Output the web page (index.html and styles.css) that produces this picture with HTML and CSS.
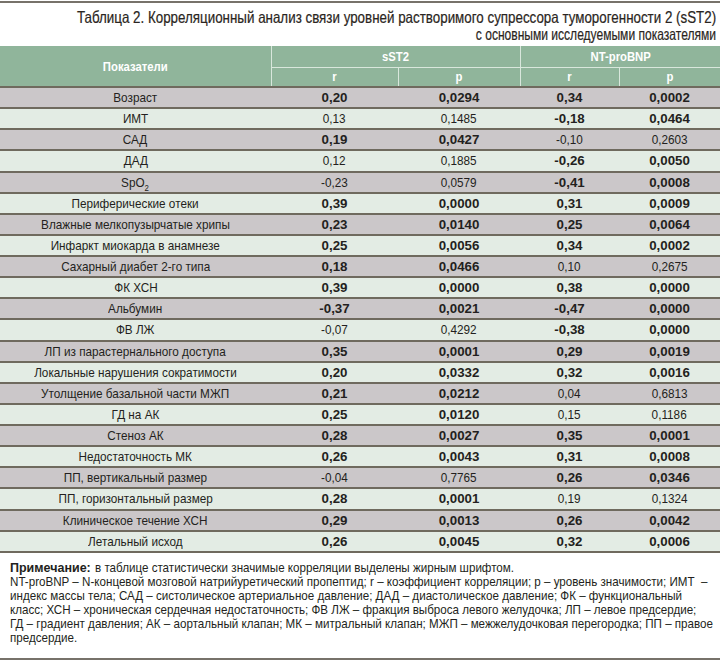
FILE: index.html
```html
<!DOCTYPE html>
<html lang="ru">
<head>
<meta charset="utf-8">
<link rel="stylesheet" href="styles.css">
</head>
<body>
<div class="page">
  <div class="rule"></div>
  <h1 class="title">
    <span class="tl tl1">Таблица 2. Корреляционный анализ связи уровней растворимого супрессора туморогенности 2 (sST2)</span>
    <span class="tl tl2">с основными исследуемыми показателями</span>
  </h1>
  <table class="tbl">
    <colgroup>
      <col class="c0"><col class="c1"><col class="c2"><col class="c3"><col class="c4">
    </colgroup>
    <thead>
      <tr class="h1">
        <th rowspan="2"><span>Показатели</span></th>
        <th colspan="2"><span>sST2</span></th>
        <th colspan="2"><span>NT-proBNP</span></th>
      </tr>
      <tr class="h2">
        <th><span>r</span></th><th><span>p</span></th><th><span>r</span></th><th><span>p</span></th>
      </tr>
    </thead>
    <tbody>
      <tr><td><span>Возраст</span></td><td class="b">0,20</td><td class="b">0,0294</td><td class="b">0,34</td><td class="b">0,0002</td></tr>
      <tr><td><span>ИМТ</span></td><td><span>0,13</span></td><td><span>0,1485</span></td><td class="b">-0,18</td><td class="b">0,0464</td></tr>
      <tr><td><span>САД</span></td><td class="b">0,19</td><td class="b">0,0427</td><td><span>-0,10</span></td><td><span>0,2603</span></td></tr>
      <tr><td><span>ДАД</span></td><td><span>0,12</span></td><td><span>0,1885</span></td><td class="b">-0,26</td><td class="b">0,0050</td></tr>
      <tr><td><span>SpO<sub>2</sub></span></td><td><span>-0,23</span></td><td><span>0,0579</span></td><td class="b">-0,41</td><td class="b">0,0008</td></tr>
      <tr><td><span>Периферические отеки</span></td><td class="b">0,39</td><td class="b">0,0000</td><td class="b">0,31</td><td class="b">0,0009</td></tr>
      <tr><td><span>Влажные мелкопузырчатые хрипы</span></td><td class="b">0,23</td><td class="b">0,0140</td><td class="b">0,25</td><td class="b">0,0064</td></tr>
      <tr><td><span>Инфаркт миокарда в анамнезе</span></td><td class="b">0,25</td><td class="b">0,0056</td><td class="b">0,34</td><td class="b">0,0002</td></tr>
      <tr><td><span>Сахарный диабет 2-го типа</span></td><td class="b">0,18</td><td class="b">0,0466</td><td><span>0,10</span></td><td><span>0,2675</span></td></tr>
      <tr><td><span>ФК ХСН</span></td><td class="b">0,39</td><td class="b">0,0000</td><td class="b">0,38</td><td class="b">0,0000</td></tr>
      <tr><td><span>Альбумин</span></td><td class="b">-0,37</td><td class="b">0,0021</td><td class="b">-0,47</td><td class="b">0,0000</td></tr>
      <tr><td><span>ФВ ЛЖ</span></td><td><span>-0,07</span></td><td><span>0,4292</span></td><td class="b">-0,38</td><td class="b">0,0000</td></tr>
      <tr><td><span>ЛП из парастернального доступа</span></td><td class="b">0,35</td><td class="b">0,0001</td><td class="b">0,29</td><td class="b">0,0019</td></tr>
      <tr><td><span>Локальные нарушения сократимости</span></td><td class="b">0,20</td><td class="b">0,0332</td><td class="b">0,32</td><td class="b">0,0016</td></tr>
      <tr><td><span>Утолщение базальной части МЖП</span></td><td class="b">0,21</td><td class="b">0,0212</td><td><span>0,04</span></td><td><span>0,6813</span></td></tr>
      <tr><td><span>ГД на АК</span></td><td class="b">0,25</td><td class="b">0,0120</td><td><span>0,15</span></td><td><span>0,1186</span></td></tr>
      <tr><td><span>Стеноз АК</span></td><td class="b">0,28</td><td class="b">0,0027</td><td class="b">0,35</td><td class="b">0,0001</td></tr>
      <tr><td><span>Недостаточность МК</span></td><td class="b">0,26</td><td class="b">0,0043</td><td class="b">0,31</td><td class="b">0,0008</td></tr>
      <tr><td><span>ПП, вертикальный размер</span></td><td><span>-0,04</span></td><td><span>0,7765</span></td><td class="b">0,26</td><td class="b">0,0346</td></tr>
      <tr><td><span>ПП, горизонтальный размер</span></td><td class="b">0,28</td><td class="b">0,0001</td><td><span>0,19</span></td><td><span>0,1324</span></td></tr>
      <tr><td><span>Клиническое течение ХСН</span></td><td class="b">0,29</td><td class="b">0,0013</td><td class="b">0,26</td><td class="b">0,0042</td></tr>
      <tr><td><span>Летальный исход</span></td><td class="b">0,26</td><td class="b">0,0045</td><td class="b">0,32</td><td class="b">0,0006</td></tr>
    </tbody>
  </table>
  <div class="note">
    <div class="ln"><strong>Примечание:</strong> <span>в таблице статистически значимые корреляции выделены жирным шрифтом.</span></div>
    <div class="ln"><span>NT-proBNP – N-концевой мозговой натрийуретический пропептид; r – коэффициент корреляции; p – уровень значимости; ИМТ &nbsp;–</span></div>
    <div class="ln"><span>индекс массы тела; САД – систолическое артериальное давление; ДАД – диастолическое давление; ФК – функциональный</span></div>
    <div class="ln"><span>класс; ХСН – хроническая сердечная недостаточность; ФВ ЛЖ – фракция выброса левого желудочка; ЛП – левое предсердие;</span></div>
    <div class="ln"><span>ГД – градиент давления; АК – аортальный клапан; МК – митральный клапан; МЖП – межжелудочковая перегородка; ПП – правое</span></div>
    <div class="ln"><span>предсердие.</span></div>
  </div>
</div>
</body>
</html>
```

FILE: styles.css
```css
* { box-sizing: border-box; }
html, body { margin: 0; padding: 0; background: #fff; }
body {
  font-family: "Liberation Sans", Arial, sans-serif;
  color: #231f20;
}
.page { width: 720px; height: 664px; overflow: hidden; }
.rule { height: 2px; background: #77726a; margin-top: 1px; }
.title {
  margin: 0;
  padding: 6px 4px 0 0;
  height: 43px;
  font-weight: normal;
  font-size: 16.5px;
  line-height: 17px;
  color: #2a2521;
  white-space: nowrap;
  display: flex;
  flex-direction: column;
  align-items: flex-end;
}
.tl {
  display: inline-block;
  transform-origin: right center;
  -webkit-text-stroke: 0.2px #2a2521;
}
.tl1 { transform: scaleX(0.81); }
.tl2 { transform: scaleX(0.73); }
.tbl {
  width: 720px;
  border-collapse: collapse;
  table-layout: fixed;
}
.c0 { width: 271px; }
.c1 { width: 127px; }
.c2 { width: 122px; }
.c3 { width: 99px; }
.c4 { width: 101px; }
.tbl span {
  display: inline-block;
  transform: scaleX(0.87);
  transform-origin: center center;
  white-space: nowrap;
}
.tbl th {
  background: #90b59b;
  color: #fff;
  font-weight: bold;
  font-size: 13px;
  padding: 0;
  border: 1px solid #d9e7dc;
  text-align: center;
}
.tbl thead tr:first-child th { border-top: 0; }
.tbl th:first-child { border-left: 0; }
.tbl tr th:last-child { border-right: 0; }
.h1 th { height: 21px; }
.h2 th { height: 20px; border-bottom: 2px solid #6f6a5e; }
.tbl thead tr.h1 th:first-child { border-bottom: 2px solid #6f6a5e; }
.tbl td {
  height: 21.14px;
  padding: 0;
  text-align: center;
  font-size: 13.5px;
  border-bottom: 2px solid #6f6a5e;
  line-height: 19px;
}
.tbl tbody tr:nth-child(odd) td { background: #cbc7c9; }
.tbl tbody tr:nth-child(even) td { background: #e3ece4; }
.tbl td.b {
  font-weight: bold;
  font-size: 13.3px;
}
.tbl sub { font-size: 9px; line-height: 0; }
.note {
  height: 107px;
  border-bottom: 2px solid #77726a;
  padding: 8px 0 0 10px;
}
.ln {
  font-size: 13.5px;
  line-height: 14px;
  height: 14px;
  white-space: nowrap;
}
.ln span {
  display: inline-block;
  transform: scaleX(0.86);
  transform-origin: left center;
}
.ln strong { font-size: 12.5px; }
```
